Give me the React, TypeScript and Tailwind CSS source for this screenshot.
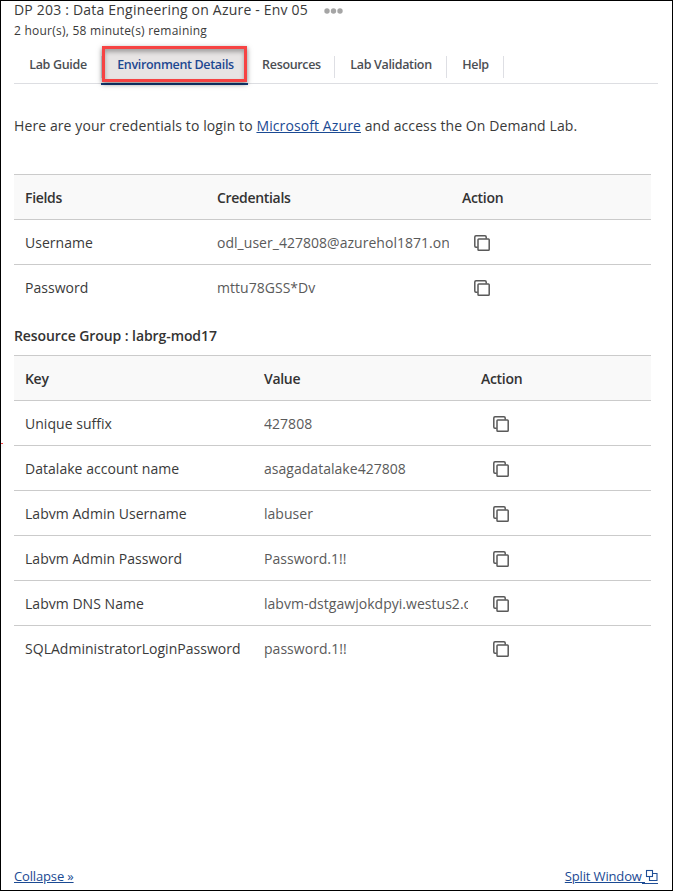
import type { ReactNode } from "react";

type Row = { label: string; value: string };

const credentials: Row[] = [
  { label: "Username", value: "odl_user_427808@azurehol1871.on" },
  { label: "Password", value: "mttu78GSS*Dv" },
];

const resources: Row[] = [
  { label: "Unique suffix", value: "427808" },
  { label: "Datalake account name", value: "asagadatalake427808" },
  { label: "Labvm Admin Username", value: "labuser" },
  { label: "Labvm Admin Password", value: "Password.1!!" },
  { label: "Labvm DNS Name", value: "labvm-dstgawjokdpyi.westus2.c" },
  { label: "SQLAdministratorLoginPassword", value: "password.1!!" },
];

function CopyIcon() {
  return (
    <svg className="mt-px" width="16" height="16" viewBox="0 0 16 16" fill="none" stroke="#595959" strokeWidth="1.5">
      <path d="M3.7 12.2H2Q.8 12.2 .8 11V2Q.8.8 2 .8H11Q12.2 .8 12.2 2V3.7" />
      <rect x="4" y="4" width="11.2" height="11.2" rx=".8" />
    </svg>
  );
}

function SplitIcon() {
  return (
    <svg className="-mt-0.5 overflow-visible" width="13" height="13" viewBox="0 0 13 13" fill="none" stroke="#1f4e96" strokeWidth="1.1">
      <rect x="1.5" y="1.5" width="6" height="6" />
      <path d="M7.5 4.5H12V11.5H4.5V7.5" />
      <path d="M-3 14.5H13" strokeWidth="1" />
    </svg>
  );
}

function DataTable({ cols, head, rows }: { cols: string; head: string[]; rows: Row[] }) {
  return (
    <div className="ml-[13px] w-[637px]">
      <div className={`grid h-[45px] items-center border-t border-[#cbcbcb] bg-[#f9f9f9] pl-[11px] font-semibold tracking-[-0.31px] text-[#333] ${cols}`}>
        {head.map((h) => (
          <span key={h}>{h}</span>
        ))}
      </div>
      {rows.map((r) => (
        <div key={r.label} className={`grid h-[45px] items-center border-t border-[#cbcbcb] pl-[11px] tracking-[0.03px] ${cols}`}>
          <span>{r.label}</span>
          <span className="mr-[13px] overflow-hidden whitespace-nowrap text-[#5a5a5a]">{r.value}</span>
          <span className="pl-3">
            <CopyIcon />
          </span>
        </div>
      ))}
    </div>
  );
}

function Tab({ className, children }: { className: string; children: ReactNode }) {
  return (
    <div className={`mt-[9px] h-[22px] border-r border-[#dedfe4] pl-px text-center leading-[18px] ${className}`}>{children}</div>
  );
}

export default function App() {
  return (
    <div className="relative flex h-[891px] w-[673px] flex-col overflow-hidden border border-black bg-white font-['Open_Sans','Noto_Sans',sans-serif] text-[14px] text-[#3a3a3a]">
      <header className="pl-[13px]">
        <div className="flex h-[19px] items-center leading-[19px]">
          <span className="-mt-0.5 w-[310px] tracking-[0.2px] whitespace-nowrap">DP 203 : Data Engineering on Azure - Env 05</span>
          <svg width="20" height="6" viewBox="0 0 20 6" fill="#a5a5a5">
            <circle cx="3" cy="3" r="2.7" />
            <circle cx="9.5" cy="3" r="2.7" />
            <circle cx="16" cy="3" r="2.7" />
          </svg>
        </div>
        <div className="h-[27px] text-[12px] leading-[21px] tracking-[0.24px]">2 hour(s), 58 minute(s) remaining</div>
      </header>
      <nav className="ml-[13px] flex h-[37px] w-[644px] border-b border-[#dddee2] text-[12.5px] font-semibold tracking-[-0.33px] text-[#4b4e53]">
        <Tab className="w-[88px]">Lab Guide</Tab>
        <div className="relative -ml-px h-[38px] w-[147px] border-b-2 border-[#143c7c] pt-[9px] pl-0.5 text-center leading-[18px] text-[#1d4891]">
          <span className="relative z-10">Environment Details</span>
          <div className="absolute top-[-1px] left-[1px] h-[36px] w-[145px] border-[3px] border-[#f64343] bg-[#e7e4e4] shadow-[0_2px_5px_rgba(0,0,0,0.5),inset_0_3px_4px_rgba(0,0,0,0.3)]" />
        </div>
        <Tab className="w-[87px]">Resources</Tab>
        <Tab className="w-[112px]">Lab Validation</Tab>
        <Tab className="w-[57px]">Help</Tab>
      </nav>
      <p className="mt-[32px] ml-[13px] h-[58px] leading-[20px] tracking-[0.1px] whitespace-nowrap">
        Here are your credentials to login to <a className="text-[#1b4a93] underline">Microsoft Azure</a> and access the On Demand Lab.
      </p>
      <DataTable cols="grid-cols-[192px_245px_1fr]" head={["Fields", "Credentials", "Action"]} rows={credentials} />
      <h2 className="ml-[13px] h-[46px] pt-[17px] leading-[20px] font-semibold tracking-[-0.08px] text-[#333]">Resource Group : labrg-mod17</h2>
      <DataTable cols="grid-cols-[239px_217px_1fr]" head={["Key", "Value", "Action"]} rows={resources} />
      <footer className="mt-auto mr-[14px] mb-[4px] ml-[13px] flex justify-between text-[13px] leading-[20px] tracking-[-0.15px] text-[#1b4a93]">
        <a className="underline">Collapse »</a>
        <a className="flex items-center underline">
          Split Window&nbsp;
          <SplitIcon />
        </a>
      </footer>
      <div className="absolute top-[442px] left-[-1px] h-px w-[3px] bg-[#f64343] shadow-[0_2px_4px_rgba(0,0,0,0.3)]" />
    </div>
  );
}
